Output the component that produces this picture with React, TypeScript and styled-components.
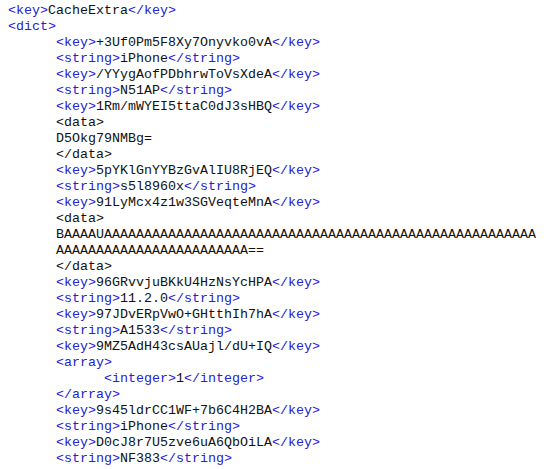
import React from "react";
import styled, { createGlobalStyle } from "styled-components";

const Global = createGlobalStyle`
  html, body { margin: 0; padding: 0; background: #ffffff; }
`;

const Viewer = styled.div`
  display: flex;
  flex-direction: column;
  padding: 3px 0 0 8px;
  font-family: "Courier New", "Nimbus Mono PS", "FreeMono", "Liberation Mono", monospace;
  font-size: 13.333px;
  line-height: 16px;
  color: #111111;
  white-space: pre;
`;

const Line = styled.div<{ $level: number }>`
  height: 16px;
  padding-left: ${(p) => p.$level * 48}px;
`;

const Tag = styled.span`
  color: #2323cf;
`;

type Row = { level: number; tag?: string; text?: string; open?: boolean; close?: boolean; plain?: string };

const rows: Row[] = [
  { level: 0, tag: "key", text: "CacheExtra" },
  { level: 0, tag: "dict", open: true },
  { level: 1, tag: "key", text: "+3Uf0Pm5F8Xy7Onyvko0vA" },
  { level: 1, tag: "string", text: "iPhone" },
  { level: 1, tag: "key", text: "/YYygAofPDbhrwToVsXdeA" },
  { level: 1, tag: "string", text: "N51AP" },
  { level: 1, tag: "key", text: "1Rm/mWYEI5ttaC0dJ3sHBQ" },
  { level: 1, plain: "<data>" },
  { level: 1, plain: "D5Okg79NMBg=" },
  { level: 1, plain: "</data>" },
  { level: 1, tag: "key", text: "5pYKlGnYYBzGvAlIU8RjEQ" },
  { level: 1, tag: "string", text: "s5l8960x" },
  { level: 1, tag: "key", text: "91LyMcx4z1w3SGVeqteMnA" },
  { level: 1, plain: "<data>" },
  { level: 1, plain: "BAAAAUAAAAAAAAAAAAAAAAAAAAAAAAAAAAAAAAAAAAAAAAAAAAAAAAAAAAAA" },
  { level: 1, plain: "AAAAAAAAAAAAAAAAAAAAAAAA==" },
  { level: 1, plain: "</data>" },
  { level: 1, tag: "key", text: "96GRvvjuBKkU4HzNsYcHPA" },
  { level: 1, tag: "string", text: "11.2.0" },
  { level: 1, tag: "key", text: "97JDvERpVwO+GHtthIh7hA" },
  { level: 1, tag: "string", text: "A1533" },
  { level: 1, tag: "key", text: "9MZ5AdH43csAUajl/dU+IQ" },
  { level: 1, tag: "array", open: true },
  { level: 2, tag: "integer", text: "1" },
  { level: 1, tag: "array", close: true },
  { level: 1, tag: "key", text: "9s45ldrCC1WF+7b6C4H2BA" },
  { level: 1, tag: "string", text: "iPhone" },
  { level: 1, tag: "key", text: "D0cJ8r7U5zve6uA6QbOiLA" },
  { level: 1, tag: "string", text: "NF383" },
];

export default function App() {
  return (
    <>
      <Global />
      <Viewer>
        {rows.map((r, i) => (
          <Line key={i} $level={r.level}>
            {r.plain !== undefined ? (
              r.plain
            ) : r.open ? (
              <Tag>{`<${r.tag}>`}</Tag>
            ) : r.close ? (
              <Tag>{`</${r.tag}>`}</Tag>
            ) : (
              <>
                <Tag>{`<${r.tag}>`}</Tag>
                {r.text}
                <Tag>{`</${r.tag}>`}</Tag>
              </>
            )}
          </Line>
        ))}
      </Viewer>
    </>
  );
}
